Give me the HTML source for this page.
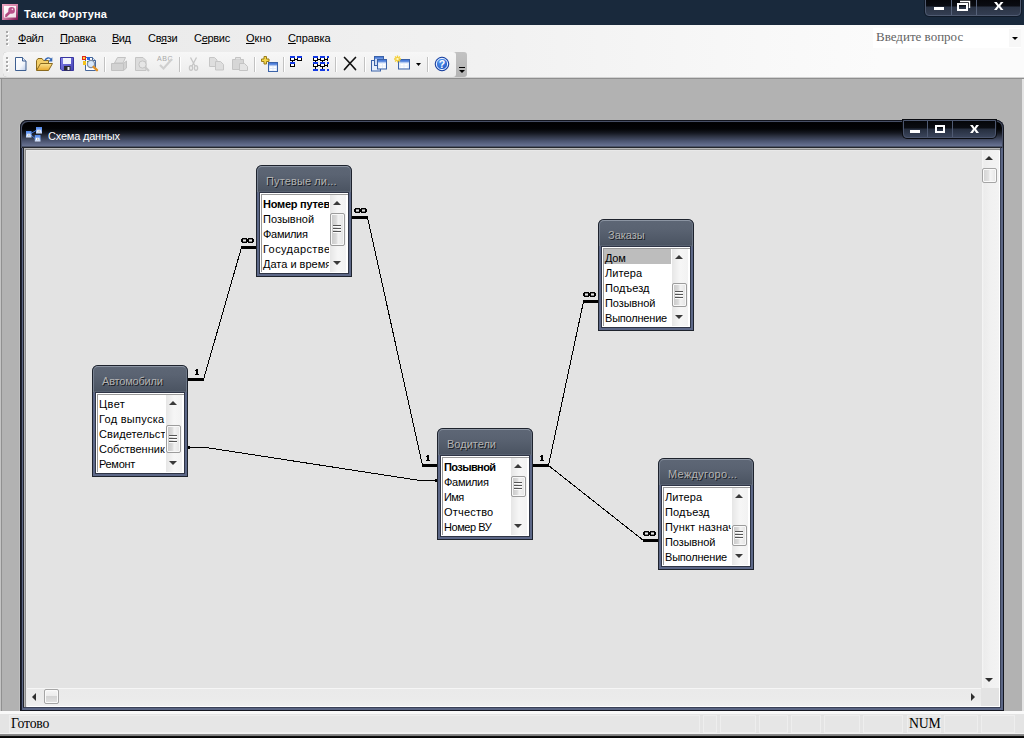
<!DOCTYPE html>
<html><head><meta charset="utf-8">
<style>
*{box-sizing:border-box;margin:0;padding:0}
html,body{width:1024px;height:738px;overflow:hidden;background:#b2b2b2;font-family:"Liberation Sans",sans-serif;font-size:11px;color:#000}
.abs{position:absolute}
i,b{font-style:normal;font-weight:normal}
#titlebar{position:absolute;left:0;top:0;width:1024px;height:25px;background:#19293c}
#titletext{position:absolute;left:24px;top:8px;color:#fff;font-weight:bold;font-size:11px;line-height:13px;white-space:nowrap;letter-spacing:.15px}
#capbtn{position:absolute;left:925px;top:-1px;width:96px;height:17px;border:1px solid #4f5a70;border-radius:0 0 4px 4px;box-shadow:0 0 0 1px #101a28;background:linear-gradient(#06070b 0,#0a0c12 6px,#2b3445 7px,#343e52 100%)}
#capbtn s{position:absolute;top:0;width:1px;height:15px;background:#56627a}
#menubar{position:absolute;left:0;top:25px;width:1024px;height:27px;background:linear-gradient(90deg,#e9e9e9 0,#ececec 200px,#f1f1f1 480px,#fbfbfb 880px,#fbfbfb 1024px)}
.mi{position:absolute;top:7px;font-size:11px;line-height:13px;white-space:nowrap;color:#000}
.mi u{text-decoration:underline;text-underline-offset:1px}
.grip{position:absolute;width:2px}
.grip i{position:absolute;left:0;width:2px;height:2px;background:#a9a9a9;box-shadow:1px 1px 0 #fff}
#tbarrow{position:absolute;left:0;top:52px;width:1024px;height:26px;border-bottom:1px solid #d2d2d2;background:linear-gradient(90deg,#e9e9e9 0,#ececec 200px,#f1f1f1 480px,#fbfbfb 880px,#fbfbfb 1024px)}
#toolbar{position:absolute;left:3px;top:52px;width:464px;height:25px;border-radius:4px 3px 3px 4px;background:linear-gradient(#c2c2c2,#b4b4b4);overflow:hidden}
#toolbar .bg{position:absolute;left:0;top:0;width:453px;height:25px;border-radius:4px 3px 3px 4px;background:linear-gradient(#f7f7f7,#f0f0f0 60%,#ebebeb)}
.sep{position:absolute;top:57px;width:1px;height:15px;background:#c2c2c2;box-shadow:1px 0 0 #fff}
#mdi{position:absolute;left:0;top:78px;width:1024px;height:633px;background:#b2b2b2;border-top:1px solid #8e8e8e}
#mdi .l0{position:absolute;left:0;top:0;width:1px;height:100%;background:#c4c4c4}
#mdi .l1{position:absolute;left:1px;top:0;width:1px;height:100%;background:#909090}
#mdi .r0{position:absolute;left:1022px;top:0;width:2px;height:100%;background:#e4e4e4}
#status{position:absolute;left:0;top:711px;width:1024px;height:27px;background:#e4e4e4;border-top:3px solid #f9f9f9}
#status .t{position:absolute;font-family:"Liberation Serif",serif;font-size:13.75px;line-height:15px;top:2px;white-space:nowrap;letter-spacing:-.2px}
#status .p{position:absolute;top:1px;height:18px;border:1px solid #eeeeee;background:#e6e6e6}
#status .bl{position:absolute;left:0;top:19px;width:1024px;height:5px;background:linear-gradient(#f0f0f0 0,#f0f0f0 1px,#909090 1px,#787878 3px,#101010 3.2px,#000 5px)}
#ask{position:absolute;left:873px;top:3px;width:148px;height:20px;background:#fff;font-family:"Liberation Serif",serif;font-size:13px;line-height:15px;color:#636363;padding:1px 0 0 3px;white-space:nowrap}
#ask .dd{position:absolute;right:0;top:1px;width:12px;height:18px;background:#f7f7f7}
#ask .dd i{position:absolute;left:3px;top:8px;border:3px solid transparent;border-top:3px solid #000;border-bottom:0}
/* child window */
#win{position:absolute;left:20px;top:120px;width:984px;height:591px;border-radius:7px 8px 0 0;background:#5b6685;box-shadow:inset 0 0 0 1px #14161f, inset 1px 0 0 1px #1d2130, -1px 0 0 #bebebe}
#wtitle{position:absolute;left:1px;top:1px;width:982px;height:27px;border-radius:6px 7px 0 0;box-shadow:inset 1px 1px 0 #474f65,inset -1px 0 0 #474f65;background:linear-gradient(#08090c 0,#010102 2px,#030406 8px,#151821 12px,#2e3444 15.5px,#4b5470 20px,#667090 24.5px,#4a5268 25.5px,#202228 26.5px)}
#wtext{position:absolute;left:27px;top:9px;color:#fff;font-size:11px;line-height:13px;white-space:nowrap;letter-spacing:-.2px}
#wbtn{position:absolute;left:882px;top:-1px;width:93px;height:18px;border:1px solid #4b556d;border-radius:0 0 4px 4px;box-shadow:0 0 0 1px #0a0c11;background:linear-gradient(#050609 0,#0b0d13 7px,#262e3e 8px,#3a445a 100%)}
#wbtn s{position:absolute;top:0;width:1px;height:16px;background:#4f5a72}
#client{position:absolute;left:3px;top:27px;width:978px;height:561px;background:#e3e3e3;border:1px solid #24262d;border-right-color:#3a4157;border-bottom-color:#3a4157;box-shadow:inset 1px 1px 0 #b6b6b6,inset 2px 2px 0 #8c8c8c,inset 3px 3px 0 #e9e9e9,inset -1px -1px 0 #fff}
.vs{position:absolute;left:982px;top:150px;width:17px;height:538px;background:linear-gradient(90deg,#f6f6f6 0,#ececec 2px,#f1f1f1 50%,#f3f3f3)}
.hs{position:absolute;left:27px;top:688px;width:954px;height:18px;background:linear-gradient(#f6f6f6 0,#f6f6f6 1px,#eaeaea 1px,#ebebeb 60%,#f0f0f0)}
.thumb{position:absolute;border:1px solid #a5a5a5;border-radius:2px;box-shadow:inset 0 0 0 1px #fafafa}
.tri{position:absolute;width:0;height:0;border:4px solid transparent}
/* table boxes */
.tb{position:absolute;width:96px;height:112px;border-radius:6px 6px 0 0;background:linear-gradient(#5e6776 0,#5a6372 10px,#4b5462 26px,#636d7d 27px,#5d6888 28px,#5d6888 100%);box-shadow:inset 0 0 0 1px #1e232d}
.tb .hl{position:absolute;left:1px;top:1px;width:94px;height:26px;border-radius:5px 5px 0 0;border-top:1px solid #8c95a3;border-left:1px solid #778191;border-right:1px solid #6c7686}
.tb .hd{position:absolute;left:10px;top:10px;font-size:11px;line-height:13px;color:#b2b2b2;white-space:nowrap;text-shadow:1px 1px 0 #181b22}
.tb .ls{position:absolute;left:3px;top:27px;width:90px;height:82px;background:#fff;border:1px solid #2f3546}
.tb .li{position:absolute;left:1px;top:1px;width:87px;height:78px;border-left:1px solid #9a9a9a;border-top:1px solid #9a9a9a;overflow:hidden}
.tb .r{position:absolute;left:0;height:15px;width:67px;font-size:11px;line-height:19px;white-space:nowrap;overflow:hidden;padding-left:1px;color:#000;top:0}
.tb .r.b{font-weight:bold}
.tb .r.s{background:#bdbdbd}
.tb .sb{position:absolute;left:70px;top:2px;width:16px;height:77px;background:linear-gradient(90deg,#e6e6e6,#f6f6f6 50%,#f2f2f2)}
.tb .au,.tb .ad{position:absolute;left:3px;width:0;height:0;border:4px solid transparent}
.tb .au{top:6px;border-bottom:4px solid #3a3a3a;border-top:0}
.tb .ad{top:66px;border-top:4px solid #3a3a3a;border-bottom:0}
.tb .th{position:absolute;left:0;width:15px;border:1px solid #9c9c9c;border-radius:2px;background:linear-gradient(90deg,#c8c8c8,#dadada 40%,#f2f2f2 55%,#e4e4e4);box-shadow:inset 0 0 0 1px #f8f8f8}
.tb .th b{position:absolute;left:2px;width:8px;height:8px;background:repeating-linear-gradient(#555 0,#555 1px,#fcfcfc 1px,#fcfcfc 2px,transparent 2px,transparent 3px)}
</style></head><body>
<div id="titlebar">
<svg class="abs" style="left:2px;top:4px" width="16" height="16" viewBox="0 0 16 16">
<defs><linearGradient id="gai" x1="0" y1="0" x2="1" y2="1"><stop offset="0" stop-color="#eeaac4"/><stop offset=".5" stop-color="#d483a8"/><stop offset="1" stop-color="#7c0f4e"/></linearGradient>
<linearGradient id="gai2" x1="0" y1="0" x2="1" y2="1"><stop offset="0" stop-color="#fff"/><stop offset="1" stop-color="#f0dde6"/></linearGradient></defs>
<rect x="0" y="0" width="16" height="16" fill="url(#gai)"/>
<rect x="2" y="2" width="12" height="11.500" fill="url(#gai2)"/>
<path d="M8 8L4 11.800" stroke="#b24a80" stroke-width="2.600" fill="none"/>
<path d="M3 11L3.300 13L5.500 12.800Z" fill="#a83c74"/>
<circle cx="9.600" cy="6.400" r="3.300" fill="#b9508a"/>
<circle cx="10.400" cy="5.400" r=".8" fill="#f4d6e4"/>
</svg>

<div id="titletext">Такси Фортуна</div>
<div id="capbtn"><s style="left:25px"></s><s style="left:50px"></s>
<svg class="abs" style="left:0;top:-1px" width="94" height="15" viewBox="0 0 94 15"><g fill="none" stroke="#fff">
<path d="M8 9.5H18" stroke-width="3"/>
<path d="M34 2.5H43.5V9" stroke-width="1.4"/><rect x="32" y="5" width="9" height="6" stroke-width="2"/>
<polygon stroke="none" fill="#fff" points="68.0,3.0 70.8,3.0 72.8,5.7 74.7,3.0 77.5,3.0 74.2,7.0 77.5,11.0 74.7,11.0 72.8,8.3 70.8,11.0 68.0,11.0 71.2,7.0"/>
</g></svg></div>
</div>
<div id="menubar">
<div class="grip" style="left:6px;top:6px"><i style="top:0"></i><i style="top:4px"></i><i style="top:8px"></i><i style="top:12px"></i></div>
<span class="mi" style="left:18px;letter-spacing:-.5px"><u>Ф</u>айл</span>
<span class="mi" style="left:60px;letter-spacing:-.2px"><u>П</u>равка</span>
<span class="mi" style="left:112px;letter-spacing:-.5px"><u>В</u>ид</span>
<span class="mi" style="left:148px;letter-spacing:-.3px">Св<u>я</u>зи</span>
<span class="mi" style="left:194px;letter-spacing:-.3px">С<u>е</u>рвис</span>
<span class="mi" style="left:246px"><u>О</u>кно</span>
<span class="mi" style="left:288px;letter-spacing:-.1px"><u>С</u>правка</span>
<div id="ask">Введите вопрос<div class="dd"><i></i></div></div>
</div>
<div id="tbarrow"></div>
<div id="toolbar"><div class="bg"></div></div>
<div class="grip" style="left:6px;top:57px"><i style="top:0"></i><i style="top:4px"></i><i style="top:8px"></i><i style="top:12px"></i></div>
<div class="sep" style="left:104px"></div><div class="sep" style="left:179px"></div><div class="sep" style="left:254px"></div><div class="sep" style="left:283px"></div><div class="sep" style="left:335px"></div><div class="sep" style="left:364px"></div><div class="sep" style="left:427px"></div>
<svg class="abs" style="left:0;top:51px" width="470" height="27" viewBox="0 51 470 27">
<defs>
<linearGradient id="gpage" x1="0" y1="0" x2="1" y2="1"><stop offset="0" stop-color="#fff"/><stop offset=".6" stop-color="#f4f7fc"/><stop offset="1" stop-color="#b9c9e6"/></linearGradient>
<linearGradient id="gfold" x1="0" y1="0" x2="0" y2="1"><stop offset="0" stop-color="#fbe38e"/><stop offset="1" stop-color="#e9a82c"/></linearGradient>
<linearGradient id="gsave" x1="0" y1="0" x2="1" y2="1"><stop offset="0" stop-color="#8684ea"/><stop offset="1" stop-color="#4442b4"/></linearGradient>
<linearGradient id="gtb" x1="0" y1="0" x2="0" y2="1"><stop offset="0" stop-color="#3f74d6"/><stop offset="1" stop-color="#7da2e6"/></linearGradient>
<radialGradient id="ghelp" cx=".4" cy=".3" r=".8"><stop offset="0" stop-color="#5a9cf4"/><stop offset="1" stop-color="#1246b8"/></radialGradient>
</defs>
<!-- new -->
<path d="M15.5 57.5H22.5L26 61V70.5H15.5Z" fill="url(#gpage)" stroke="#3e5f91" stroke-width="1"/>
<path d="M22.5 57.5V61H26" fill="#dfe8f6" stroke="#3e5f91" stroke-width="1"/>
<!-- open -->
<path d="M36.5 70V60.5L38 58.5H42L43.5 60.5H48.5V63" fill="#f3cf6a" stroke="#8a6a1e" stroke-width="1"/>
<path d="M36.5 70.5L40.5 63.5H52.5L48.5 70.5Z" fill="url(#gfold)" stroke="#8a6a1e" stroke-width="1"/>
<path d="M45 60.5C46 57.5 49.5 57 51 59.5" fill="none" stroke="#3466b4" stroke-width="1.4"/>
<path d="M52.3 57.2V61.4H48.4Z" fill="#3466b4"/>
<!-- save -->
<path d="M60.5 57.5H73.5V70.5H62L60.5 69Z" fill="url(#gsave)" stroke="#3836a0" stroke-width="1"/>
<rect x="63" y="58" width="8" height="6" fill="#f2f4fb"/>
<rect x="64" y="66" width="6.5" height="4.5" fill="#2a2a2e"/>
<rect x="67.5" y="67" width="2" height="3" fill="#e8e8f0"/>
<!-- search/preview -->
<path d="M85.5 57.5H92.5L95.5 60.5V70.5H85.5Z" fill="#fdfdfe" stroke="#45669a" stroke-width="1"/>
<path d="M92.5 57.5V60.5H95.5" fill="#dfe8f6" stroke="#45669a"/>
<rect x="82" y="56" width="4" height="4" fill="#e02a1c"/><rect x="83" y="57" width="2" height="2" fill="#ffd23a"/>
<rect x="87" y="57" width="3" height="3" fill="#2a62e0"/>
<rect x="83" y="61" width="3" height="4" fill="#f4c21c"/>
<rect x="87" y="61" width="2" height="3" fill="#3f9a3a"/>
<circle cx="91" cy="64" r="3.6" fill="#d8e8fb" stroke="#7f8ea4" stroke-width="1.3"/>
<path d="M93.6 66.8L97 70.2" stroke="#e0922a" stroke-width="2.4" stroke-linecap="round"/>
<!-- print (disabled) -->
<g fill="#d2d2d2" stroke="#c2c2c2" stroke-width="1">
<path d="M114.500 63L117.500 57.500H125.500L123 63Z" fill="#e0e0e0"/>
<path d="M111.500 63.500H123.500L126.500 61V68L123.500 70.500H111.500Z"/>
<path d="M123.500 63.500V70.500" fill="none"/>
</g>
<!-- preview (disabled) -->
<g stroke="#c4c4c4" stroke-width="1">
<path d="M135.500 57.500H143L146 60.500V70.500H135.500Z" fill="#dcdcdc"/>
<circle cx="142.500" cy="64.500" r="3.600" fill="#e6e6e6"/>
<path d="M145 67L149 71" stroke-width="2.200" stroke="#c8c8c8"/>
</g>
<!-- spelling (disabled) -->
<text x="157" y="60.500" font-family="Liberation Sans" font-size="7" fill="#a9a9a9" textLength="15.5">ABC</text>
<path d="M160 65L163.500 68.500L172 59" fill="none" stroke="#cfcfcf" stroke-width="2.200"/>
<!-- cut (disabled) -->
<g fill="none" stroke="#c6c6c6" stroke-width="1.300">
<path d="M190.500 57.500L195 66M196.500 57.500L192 66"/>
<ellipse cx="191" cy="68" rx="1.600" ry="2.300"/><ellipse cx="196" cy="68" rx="1.600" ry="2.300"/>
</g>
<!-- copy (disabled) -->
<g fill="#dedede" stroke="#c6c6c6" stroke-width="1">
<path d="M209.500 57.500H214.500L217 60V66.500H209.500Z"/>
<path d="M215.500 61.500H220.500L223.500 64.500V70H215.500Z"/>
</g>
<!-- paste (disabled) -->
<g fill="#d6d6d6" stroke="#c4c4c4" stroke-width="1">
<path d="M232.500 59.500H243.500V69.500H232.500Z"/>
<path d="M235.500 59.500V57.500H240.500V59.500" fill="#e2e2e2"/>
<path d="M239.500 63.500H244.500L247.500 66.500V70.500H239.500Z" fill="#e4e4e4"/>
</g>
<!-- add table -->
<path d="M264 56.500H266.500V59H269V61.500H266.500V64H264V61.500H261.500V59H264Z" fill="#f6d84a" stroke="#9a7c18" stroke-width="1"/>
<rect x="268.500" y="62.500" width="9" height="9" fill="#dfe9fa" stroke="#3b62a8" stroke-width="1"/>
<rect x="269" y="63" width="8" height="2.500" fill="url(#gtb)"/>
<rect x="270" y="66.500" width="2.500" height="1.500" fill="#fff"/><rect x="273.500" y="66.500" width="2.500" height="1.500" fill="#fff"/><rect x="270" y="69" width="2.500" height="1.500" fill="#fff"/><rect x="273.500" y="69" width="2.500" height="1.500" fill="#fff"/>
<!-- direct relationships -->
<g shape-rendering="crispEdges">
<g fill="#fff" stroke="#000" stroke-width="1">
<rect x="290.500" y="57.500" width="4" height="3"/><rect x="297.500" y="57.500" width="4" height="3"/><rect x="290.500" y="63.500" width="4" height="3"/>
</g>
<path d="M295 59.500H297M292.500 61V63" stroke="#000" fill="none"/>
<g fill="#1238e4"><rect x="290" y="56" width="5" height="2"/><rect x="297" y="56" width="5" height="2"/><rect x="290" y="62" width="5" height="2"/></g>
<!-- all relationships -->
<g fill="#fff" stroke="#000" stroke-width="1">
<rect x="313.500" y="57.500" width="4" height="3"/><rect x="320.500" y="57.500" width="4" height="3"/>
<rect x="313.500" y="63.500" width="4" height="3"/><rect x="320.500" y="63.500" width="4" height="3"/>
</g>
<path d="M318 59.500H320M325 59.500H327M318 65.500H320M325 65.500H327M315.500 61V63M322.500 61V63M315.500 67V69M322.500 67V69M327.500 57V61M327.500 63V67" stroke="#000" fill="none"/>
<g fill="#1238e4"><rect x="313" y="56" width="5" height="2"/><rect x="320" y="56" width="5" height="2"/><rect x="327" y="56" width="2" height="2"/>
<rect x="313" y="62" width="5" height="2"/><rect x="320" y="62" width="5" height="2"/><rect x="327" y="62" width="2" height="2"/>
<rect x="313" y="69" width="5" height="2"/><rect x="320" y="69" width="5" height="2"/><rect x="327" y="69" width="2" height="2"/></g>
</g>
<!-- delete X -->
<path d="M344.500 57.500C348 61 352 65.500 355.500 69.500M355.500 57.500C352 61 347.500 66 344.500 69.500" fill="none" stroke="#111" stroke-width="1.700" stroke-linecap="round"/>
<!-- db window -->
<g stroke="#3b62a8" stroke-width="1">
<rect x="371.500" y="60.500" width="9" height="10.500" fill="#e6eefb"/>
<rect x="374.500" y="56.500" width="9" height="9" fill="#cfdcf4"/>
<rect x="377.500" y="59.500" width="9" height="9.500" fill="#e6eefb"/>
</g>
<rect x="375" y="57" width="8" height="2" fill="url(#gtb)"/><rect x="378" y="60" width="8" height="2.500" fill="url(#gtb)"/>
<rect x="379.500" y="64" width="2.500" height="1.500" fill="#fff"/><rect x="383" y="64" width="2.500" height="1.500" fill="#fff"/><rect x="379.500" y="66.500" width="2.500" height="1.500" fill="#fff"/><rect x="383" y="66.500" width="2.500" height="1.500" fill="#fff"/>
<!-- new object -->
<rect x="398.500" y="59.500" width="11" height="9.500" fill="#e6eefb" stroke="#3b62a8" stroke-width="1"/>
<rect x="399" y="60" width="10" height="2.500" fill="url(#gtb)"/>
<rect x="400.500" y="64" width="3" height="1.500" fill="#fff"/><rect x="404.500" y="64" width="3" height="1.500" fill="#fff"/><rect x="400.500" y="66.500" width="3" height="1.500" fill="#fff"/><rect x="404.500" y="66.500" width="3" height="1.500" fill="#fff"/>
<path d="M397.500 55.500V62.500M394 59H401M395 56.500L400 61.500M400 56.500L395 61.500" stroke="#f4cf3a" stroke-width="1.300" fill="none"/>
<rect x="396.500" y="58" width="2" height="2" fill="#fff6c0"/>
<path d="M416 63H421L418.500 66Z" fill="#000"/>
<!-- help -->
<circle cx="442" cy="64" r="6.800" fill="url(#ghelp)" stroke="#1a3f9c" stroke-width="1"/>
<circle cx="442" cy="64" r="5.600" fill="none" stroke="#e8f0ff" stroke-width="1"/>
<text x="442" y="68" font-family="Liberation Sans" font-size="10.500" font-weight="bold" fill="#fff" text-anchor="middle">?</text>
<!-- overflow -->
<rect x="459" y="67" width="6" height="1" fill="#000"/><path d="M459 70H465L462 73Z" fill="#000"/>
</svg>

<div id="mdi"><div class="l0"></div><div class="l1"></div><div class="r0"></div></div>
<div id="win">
 <div id="wtitle">
 <svg class="abs" style="left:4px;top:5px" width="20" height="18" viewBox="25 126 20 18">
<defs><linearGradient id="gwi" x1="0" y1="0" x2="0" y2="1"><stop offset="0" stop-color="#4f86ea"/><stop offset=".45" stop-color="#7aa6f2"/><stop offset="1" stop-color="#dfe9fc"/></linearGradient></defs>
<path d="M31 133.500L36 130.500M31 135L35 138.500" stroke="#3f78e0" stroke-width="1" fill="none"/>
<rect x="26" y="131" width="5.500" height="6.500" fill="url(#gwi)"/><rect x="27.300" y="133.800" width="3" height="2.400" fill="#fff"/><rect x="28.300" y="134.700" width="1.200" height=".7" fill="#345"/>
<rect x="36" y="127" width="6" height="6.500" fill="url(#gwi)"/><rect x="37.300" y="129.800" width="3.400" height="2.400" fill="#fff"/><rect x="38.500" y="130.700" width="1.200" height=".7" fill="#345"/>
<rect x="34.800" y="135" width="5.700" height="6.500" fill="url(#gwi)"/><rect x="36" y="137.800" width="3.300" height="2.400" fill="#fff"/><rect x="37.200" y="138.700" width="1.200" height=".7" fill="#345"/>
</svg>

 <div id="wtext">Схема данных</div>
 <div id="wbtn"><s style="left:23px"></s><s style="left:48px"></s>
 <svg class="abs" style="left:0;top:-1px" width="93" height="17" viewBox="0 0 93 17"><g fill="none" stroke="#fff">
 <path d="M6 11.500H16" stroke-width="3"/>
 <rect x="32" y="6" width="8" height="6" stroke-width="2"/>
 <polygon stroke="none" fill="#fff" points="66.0,5.0 68.8,5.0 70.5,7.7 72.2,5.0 75.0,5.0 72.0,9.0 75.0,13.0 72.2,13.0 70.5,10.3 68.8,13.0 66.0,13.0 69.0,9.0"/>
 </g></svg></div>
 </div>
 <div id="client"></div>
</div>
<div class="vs"><i class="tri" style="left:3px;top:6px;border-width:0 4px 4.5px;border-bottom-color:#2e2e2e"></i><i class="tri" style="left:3px;top:528px;border-width:4.5px 4px 0;border-top-color:#2e2e2e"></i>
<div class="thumb" style="left:0;top:18px;width:15px;height:15px;background:linear-gradient(90deg,#d2d2d2,#e4e4e4 48%,#f6f6f6 52%,#e6e6e6)"></div></div>
<div class="hs"><i class="tri" style="left:5px;top:5px;border-width:4px 4.5px 4px 0;border-right-color:#2e2e2e"></i><i class="tri" style="left:944px;top:5px;border-width:4px 0 4px 4.5px;border-left-color:#2e2e2e"></i>
<div class="thumb" style="left:17px;top:1px;width:15px;height:15px;background:linear-gradient(#f6f6f6,#ececec 45%,#d4d4d4 50%,#e2e2e2)"></div></div>
<div class="abs" style="left:981px;top:689px;width:18px;height:17px;background:#e3e3e3"></div>
<div class="tb" style="left:256px;top:165px"><div class="hl"></div><div class="hd" style="letter-spacing:0.12px">Путевые ли...</div><div class="ls"><div class="li"><div class="r b" style="top:0px;letter-spacing:-0.25px">Номер путевого</div><div class="r" style="top:15px;letter-spacing:0px">Позывной</div><div class="r" style="top:30px;letter-spacing:-0.3px">Фамилия</div><div class="r" style="top:45px;letter-spacing:0.4px">Государственный</div><div class="r" style="top:60px;letter-spacing:0px">Дата и время</div></div><div class="sb"><i class="au"></i><i class="ad"></i><div class="th" style="top:18px;height:33px"><b style="top:11px"></b></div></div></div></div><div class="tb" style="left:598px;top:219px"><div class="hl"></div><div class="hd" style="letter-spacing:0px">Заказы</div><div class="ls"><div class="li"><div class="r s" style="top:0px;letter-spacing:-0.25px">Дом</div><div class="r" style="top:15px;letter-spacing:0.1px">Литера</div><div class="r" style="top:30px;letter-spacing:0.1px">Подъезд</div><div class="r" style="top:45px;letter-spacing:-0.1px">Позывной</div><div class="r" style="top:60px;letter-spacing:-0.2px">Выполнение</div></div><div class="sb"><i class="au"></i><i class="ad"></i><div class="th" style="top:34px;height:24px"><b style="top:7px"></b></div></div></div></div><div class="tb" style="left:92px;top:365px"><div class="hl"></div><div class="hd" style="letter-spacing:-0.2px">Автомобили</div><div class="ls"><div class="li"><div class="r" style="top:0px;letter-spacing:0.4px">Цвет</div><div class="r" style="top:15px;letter-spacing:0.28px">Год выпуска</div><div class="r" style="top:30px;letter-spacing:0.1px">Свидетельство</div><div class="r" style="top:45px;letter-spacing:0px">Собственник</div><div class="r" style="top:60px;letter-spacing:-0.3px">Ремонт</div></div><div class="sb"><i class="au"></i><i class="ad"></i><div class="th" style="top:30px;height:28px"><b style="top:9px"></b></div></div></div></div><div class="tb" style="left:437px;top:428px"><div class="hl"></div><div class="hd" style="letter-spacing:0px">Водители</div><div class="ls"><div class="li"><div class="r b" style="top:0px;letter-spacing:-0.6px">Позывной</div><div class="r" style="top:15px;letter-spacing:-0.3px">Фамилия</div><div class="r" style="top:30px;letter-spacing:-0.55px">Имя</div><div class="r" style="top:45px;letter-spacing:0.2px">Отчество</div><div class="r" style="top:60px;letter-spacing:-0.45px">Номер ВУ</div></div><div class="sb"><i class="au"></i><i class="ad"></i><div class="th" style="top:18px;height:21px"><b style="top:5px"></b></div></div></div></div><div class="tb" style="left:658px;top:458px"><div class="hl"></div><div class="hd" style="letter-spacing:0.3px">Междугоро...</div><div class="ls"><div class="li"><div class="r" style="top:0px;letter-spacing:0.1px">Литера</div><div class="r" style="top:15px;letter-spacing:0.1px">Подъезд</div><div class="r" style="top:30px;letter-spacing:0.15px">Пункт назначения</div><div class="r" style="top:45px;letter-spacing:-0.1px">Позывной</div><div class="r" style="top:60px;letter-spacing:-0.2px">Выполнение</div></div><div class="sb"><i class="au"></i><i class="ad"></i><div class="th" style="top:37px;height:21px"><b style="top:5px"></b></div></div></div></div>
<svg class="abs" style="left:0;top:0" width="1024" height="738" shape-rendering="crispEdges">
 <g stroke="#000" fill="none">
  <!-- Avto(1) -> Putevye(inf) -->
  <path d="M188 379.5H204" stroke-width="3"/>
  <path d="M241 247.5H256" stroke-width="3"/>
  <path d="M203.5 379.5L241.5 247.5" stroke-width="1"/>
  <!-- Putevye(inf) -> Voditeli(1) -->
  <path d="M352 217.5H368" stroke-width="3"/>
  <path d="M422 465.5H437" stroke-width="3"/>
  <path d="M367.5 217.5L422.5 465.5" stroke-width="1"/>
  <!-- Avto -> Voditeli thin -->
  <path d="M188 447.5H206L420 480.5H437" stroke-width="1"/>
  <!-- Voditeli(1) -> Zakazy(inf) -->
  <path d="M533 465.5H549" stroke-width="3"/>
  <path d="M583 301.5H598" stroke-width="3"/>
  <path d="M548.5 465.5L583.5 301.5" stroke-width="1"/>
  <!-- Voditeli(1) -> Mezhdu(inf) -->
  <path d="M643 540.5H658" stroke-width="3"/>
  <path d="M548.5 465.5L643.5 540.5" stroke-width="1"/>
 </g>
 <g fill="#000" stroke="none">
  <rect x="188" y="446" width="2" height="3"/>
  <rect x="435" y="479" width="2" height="3"/>
 </g>
</svg>
<svg class="abs" style="left:241px;top:238px" width="13" height="5" viewBox="0 0 13 5" shape-rendering="crispEdges" fill="#000"><rect x="1" y="0" width="5" height="1"/><rect x="7" y="0" width="5" height="1"/><rect x="0" y="1" width="2" height="1"/><rect x="2" y="1" width="3" height="1" fill-opacity=".42"/><rect x="5" y="1" width="3" height="1"/><rect x="8" y="1" width="3" height="1" fill-opacity=".42"/><rect x="11" y="1" width="2" height="1"/><rect x="0" y="2" width="2" height="1"/><rect x="5" y="2" width="3" height="1"/><rect x="11" y="2" width="2" height="1"/><rect x="0" y="3" width="2" height="1"/><rect x="2" y="3" width="3" height="1" fill-opacity=".42"/><rect x="5" y="3" width="3" height="1"/><rect x="8" y="3" width="3" height="1" fill-opacity=".42"/><rect x="11" y="3" width="2" height="1"/><rect x="1" y="4" width="5" height="1"/><rect x="7" y="4" width="5" height="1"/></svg><svg class="abs" style="left:354px;top:208px" width="13" height="5" viewBox="0 0 13 5" shape-rendering="crispEdges" fill="#000"><rect x="1" y="0" width="5" height="1"/><rect x="7" y="0" width="5" height="1"/><rect x="0" y="1" width="2" height="1"/><rect x="2" y="1" width="3" height="1" fill-opacity=".42"/><rect x="5" y="1" width="3" height="1"/><rect x="8" y="1" width="3" height="1" fill-opacity=".42"/><rect x="11" y="1" width="2" height="1"/><rect x="0" y="2" width="2" height="1"/><rect x="5" y="2" width="3" height="1"/><rect x="11" y="2" width="2" height="1"/><rect x="0" y="3" width="2" height="1"/><rect x="2" y="3" width="3" height="1" fill-opacity=".42"/><rect x="5" y="3" width="3" height="1"/><rect x="8" y="3" width="3" height="1" fill-opacity=".42"/><rect x="11" y="3" width="2" height="1"/><rect x="1" y="4" width="5" height="1"/><rect x="7" y="4" width="5" height="1"/></svg><svg class="abs" style="left:583px;top:292px" width="13" height="5" viewBox="0 0 13 5" shape-rendering="crispEdges" fill="#000"><rect x="1" y="0" width="5" height="1"/><rect x="7" y="0" width="5" height="1"/><rect x="0" y="1" width="2" height="1"/><rect x="2" y="1" width="3" height="1" fill-opacity=".42"/><rect x="5" y="1" width="3" height="1"/><rect x="8" y="1" width="3" height="1" fill-opacity=".42"/><rect x="11" y="1" width="2" height="1"/><rect x="0" y="2" width="2" height="1"/><rect x="5" y="2" width="3" height="1"/><rect x="11" y="2" width="2" height="1"/><rect x="0" y="3" width="2" height="1"/><rect x="2" y="3" width="3" height="1" fill-opacity=".42"/><rect x="5" y="3" width="3" height="1"/><rect x="8" y="3" width="3" height="1" fill-opacity=".42"/><rect x="11" y="3" width="2" height="1"/><rect x="1" y="4" width="5" height="1"/><rect x="7" y="4" width="5" height="1"/></svg><svg class="abs" style="left:643px;top:531px" width="13" height="5" viewBox="0 0 13 5" shape-rendering="crispEdges" fill="#000"><rect x="1" y="0" width="5" height="1"/><rect x="7" y="0" width="5" height="1"/><rect x="0" y="1" width="2" height="1"/><rect x="2" y="1" width="3" height="1" fill-opacity=".42"/><rect x="5" y="1" width="3" height="1"/><rect x="8" y="1" width="3" height="1" fill-opacity=".42"/><rect x="11" y="1" width="2" height="1"/><rect x="0" y="2" width="2" height="1"/><rect x="5" y="2" width="3" height="1"/><rect x="11" y="2" width="2" height="1"/><rect x="0" y="3" width="2" height="1"/><rect x="2" y="3" width="3" height="1" fill-opacity=".42"/><rect x="5" y="3" width="3" height="1"/><rect x="8" y="3" width="3" height="1" fill-opacity=".42"/><rect x="11" y="3" width="2" height="1"/><rect x="1" y="4" width="5" height="1"/><rect x="7" y="4" width="5" height="1"/></svg><svg class="abs" style="left:195px;top:369px" width="4" height="6" viewBox="0 0 4 6" shape-rendering="crispEdges"><path d="M1 0h2v5h1v1h-4v-1h1v-3h-1v-1h1z" fill="#000"/></svg><svg class="abs" style="left:426px;top:455px" width="4" height="6" viewBox="0 0 4 6" shape-rendering="crispEdges"><path d="M1 0h2v5h1v1h-4v-1h1v-3h-1v-1h1z" fill="#000"/></svg><svg class="abs" style="left:540px;top:455px" width="4" height="6" viewBox="0 0 4 6" shape-rendering="crispEdges"><path d="M1 0h2v5h1v1h-4v-1h1v-3h-1v-1h1z" fill="#000"/></svg>
<div id="status">
<div class="p" style="left:9px;width:691px"></div><div class="p" style="left:703px;width:14px"></div><div class="p" style="left:720px;width:36px"></div><div class="p" style="left:759px;width:29px"></div><div class="p" style="left:791px;width:30px"></div><div class="p" style="left:824px;width:36px"></div><div class="p" style="left:863px;width:40px"></div><div class="p" style="left:907px;width:34px"></div><div class="p" style="left:944px;width:34px"></div><div class="p" style="left:981px;width:34px"></div>
<span class="t" style="left:11px">Готово</span><span class="t" style="left:909px">NUM</span>
<div class="bl"></div>
</div>
</body></html>
